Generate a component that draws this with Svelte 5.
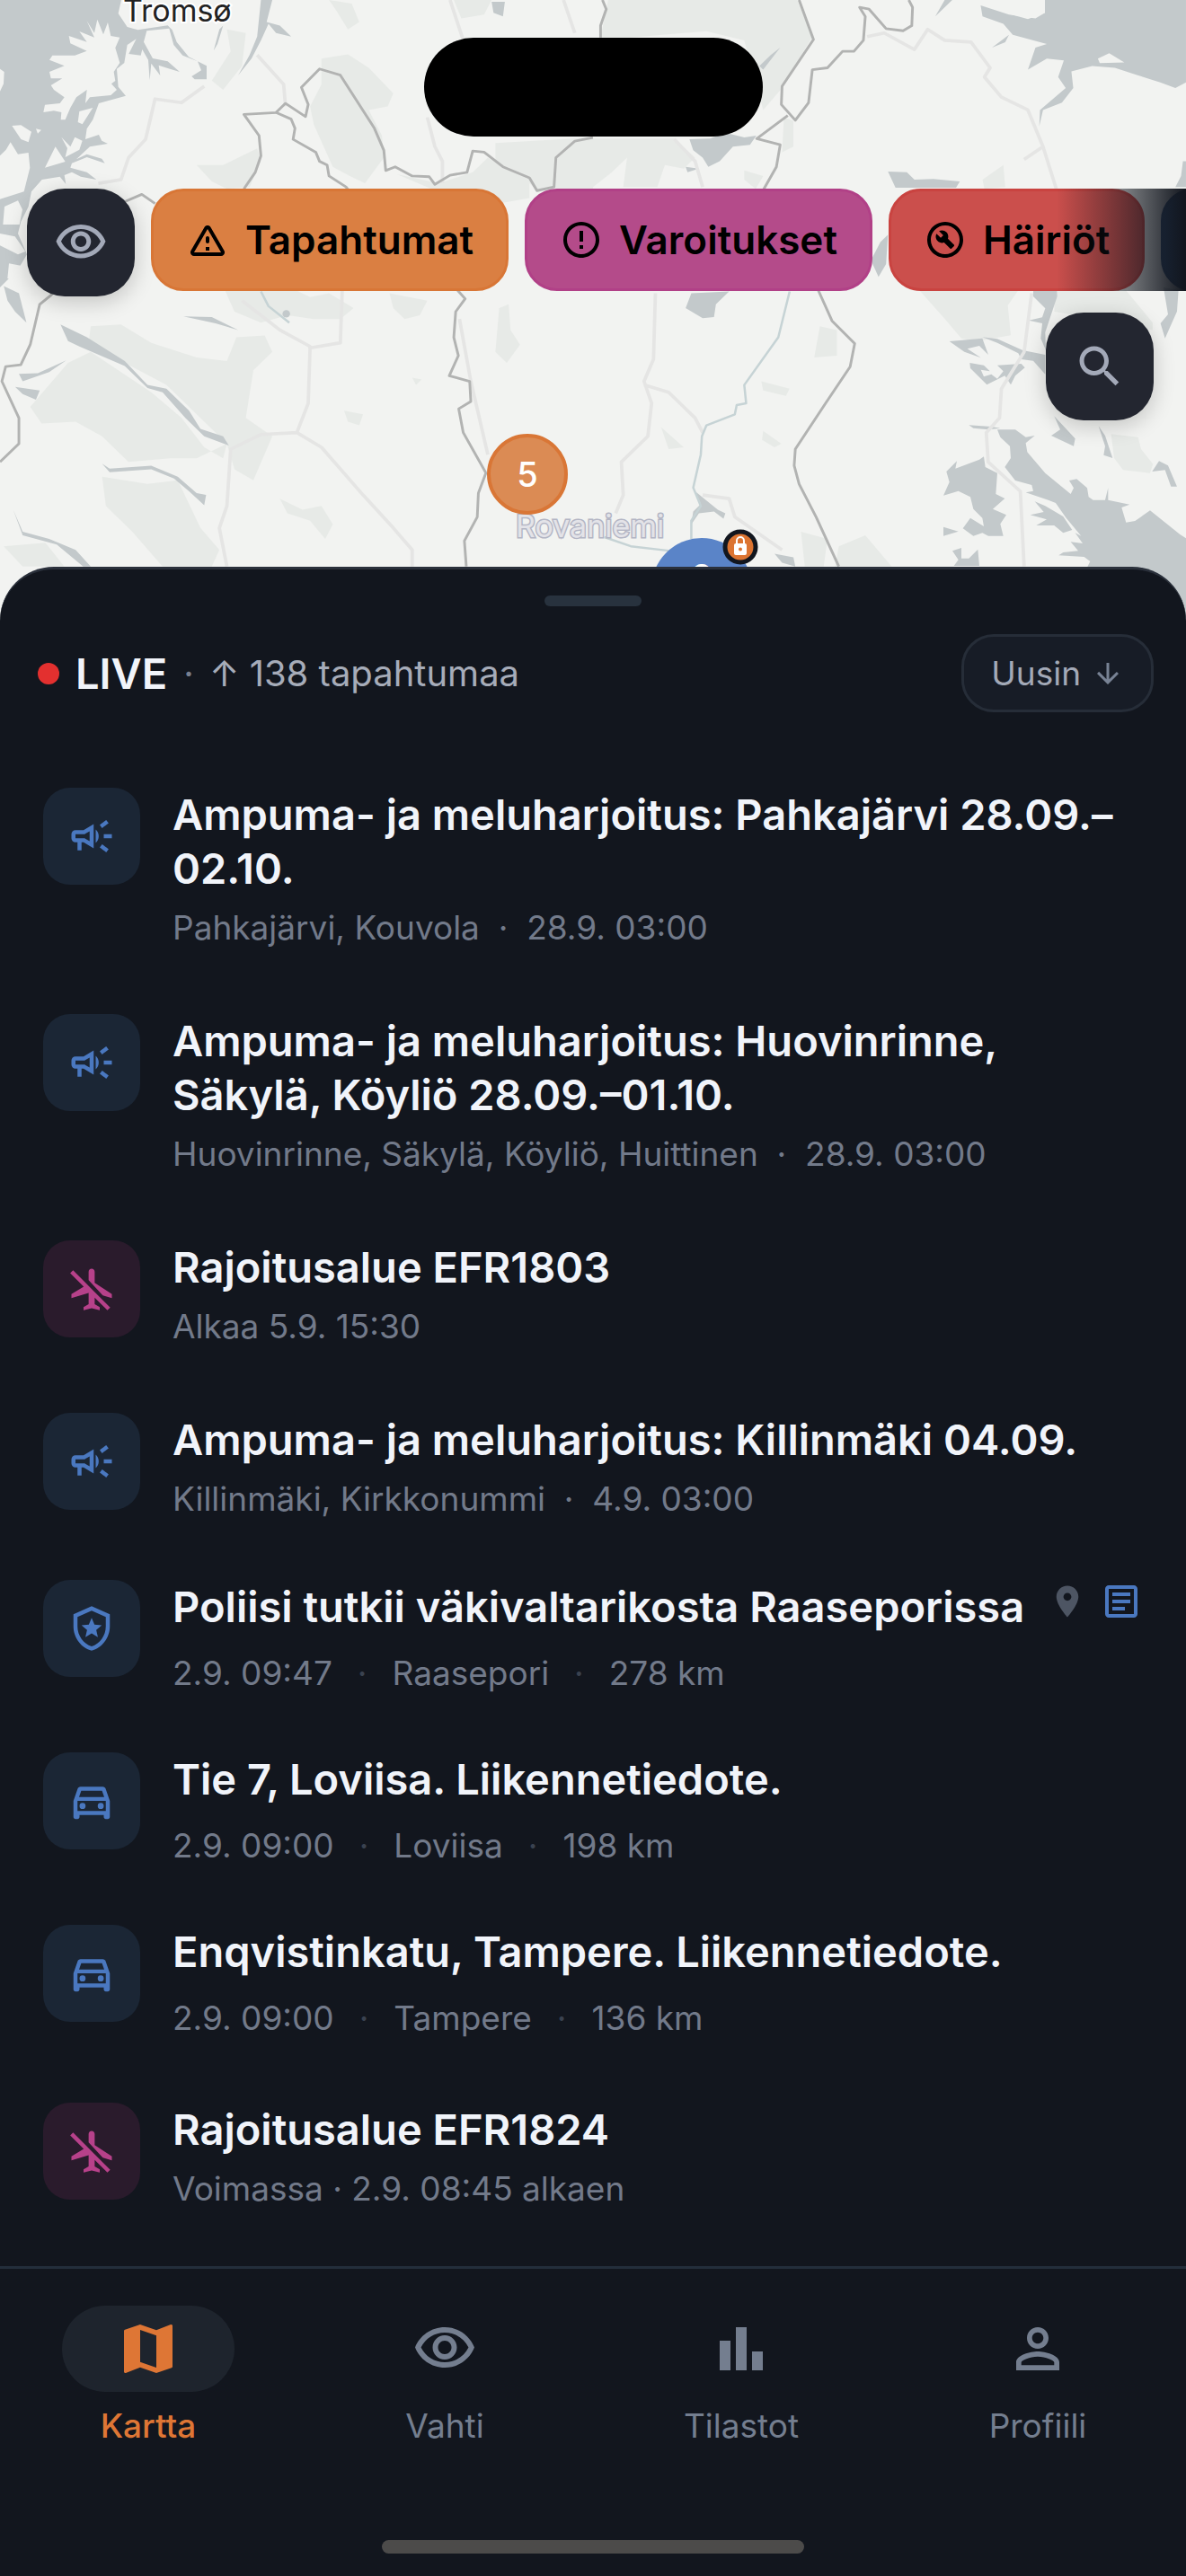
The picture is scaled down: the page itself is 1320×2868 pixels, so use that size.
<script lang="ts">
    const icons = {
        eye: 'M12 6c3.79 0 7.17 2.13 8.82 5.5C19.17 14.87 15.79 17 12 17s-7.17-2.13-8.82-5.5C4.83 8.13 8.21 6 12 6m0-2C7 4 2.73 7.11 1 11.5 2.73 15.89 7 19 12 19s9.27-3.11 11-7.5C21.27 7.11 17 4 12 4zm0 5c1.38 0 2.5 1.12 2.5 2.5S13.38 14 12 14s-2.5-1.12-2.5-2.5S10.62 9 12 9m0-2c-2.48 0-4.5 2.02-4.5 4.5S9.52 16 12 16s4.5-2.02 4.5-4.5S14.48 7 12 7z',
        search: 'M15.5 14h-.79l-.28-.27C15.41 12.59 16 11.11 16 9.5 16 5.91 13.09 3 9.5 3S3 5.91 3 9.5 5.91 16 9.5 16c1.61 0 3.09-.59 4.23-1.57l.27.28v.79l5 4.99L20.49 19l-4.99-5zm-6 0C7.01 14 5 11.99 5 9.5S7.01 5 9.5 5 14 7.01 14 9.5 11.99 14 9.5 14z',
        warning: 'M12 5.99L19.53 19H4.47L12 5.99M2.74 18c-.77 1.33.19 3 1.73 3h15.06c1.54 0 2.5-1.67 1.73-3L13.73 4.99c-.77-1.33-2.69-1.33-3.46 0L2.74 18zM11 11v2c0 .55.45 1 1 1s1-.45 1-1v-2c0-.55-.45-1-1-1s-1 .45-1 1zm0 5h2v2h-2z',
        error: 'M11 15h2v2h-2zm0-8h2v6h-2zm.99-5C6.47 2 2 6.48 2 12s4.47 10 9.99 10C17.52 22 22 17.52 22 12S17.52 2 11.99 2zM12 20c-4.42 0-8-3.58-8-8s3.58-8 8-8 8 3.58 8 8-3.58 8-8 8z',
        build: 'M12 2C6.48 2 2 6.48 2 12s4.48 10 10 10 10-4.48 10-10S17.52 2 12 2zm0 18c-4.41 0-8-3.59-8-8s3.59-8 8-8 8 3.59 8 8-3.59 8-8 8zM13.49 11.38c.43-1.22.17-2.64-.81-3.62-1.11-1.11-2.79-1.3-4.1-.59l2.35 2.35-1.41 1.41-2.35-2.35c-.71 1.32-.52 2.99.59 4.1.98.98 2.4 1.24 3.62.81l3.41 3.41c.2.2.51.2.71 0l1.4-1.4c.2-.2.2-.51 0-.71l-3.41-3.41z',
        campaign: 'M18 11v2h4v-2h-4zM16 17.61c.96.71 2.21 1.65 3.2 2.39.4-.53.8-1.07 1.2-1.6-.99-.74-2.24-1.68-3.2-2.4-.4.54-.8 1.08-1.2 1.61zM20.4 5.6c-.4-.53-.8-1.07-1.2-1.6-.99.74-2.24 1.68-3.2 2.4.4.53.8 1.07 1.2 1.6.96-.72 2.21-1.65 3.2-2.4zM4 9c-1.1 0-2 .9-2 2v2c0 1.1.9 2 2 2h1v4h2v-4h1l5 3V6L8 9H4zm5.03 1.71L11 9.53v4.94l-1.97-1.18-.48-.29H4v-2h4.55l.48-.29zM15.5 12c0-1.33-.58-2.53-1.5-3.35v6.69c.92-.81 1.5-2.01 1.5-3.34z',
        flightOff: 'M10.5 7.67V3.5C10.5 2.67 11.17 2 12 2s1.5.67 1.5 1.5V9l8.5 5.5v2l-4.49-1.33L10.5 7.67zM19.78 22.61l1.41-1.41L13.5 13.5 9.56 9.56 2.81 2.81 1.39 4.22l6.7 6.7L2 14.5v2L10.5 14v5.5L8 21v1.5l4-1 4 1V21l-2.5-1.5v-3.18l6.28 6.29z',
        police: 'M12 1L3 5v6c0 5.55 3.84 10.74 9 12 5.16-1.26 9-6.45 9-12V5l-9-4zm7 10c0 4.52-2.98 8.69-7 9.93C7.98 19.69 5 15.52 5 11V6.3l7-3.11 7 3.11V11zM12 14.44l3.09 1.86-.82-3.51L17 10.42l-3.6-.31L12 6.8l-1.4 3.31-3.6.31 2.73 2.37-.82 3.51z',
        car: 'M18.92 6.01C18.72 5.42 18.16 5 17.5 5h-11c-.66 0-1.21.42-1.42 1.01L3 12v8c0 .55.45 1 1 1h1c.55 0 1-.45 1-1v-1h12v1c0 .55.45 1 1 1h1c.55 0 1-.45 1-1v-8l-2.08-5.99zM6.85 7h10.29l1.08 3.11H5.77L6.85 7zM19 17H5v-5h14v5zM6 14.5a1.5 1.5 0 1 0 3 0a1.5 1.5 0 1 0-3 0zM15 14.5a1.5 1.5 0 1 0 3 0a1.5 1.5 0 1 0-3 0z',
        place: 'M12 2C8.13 2 5 5.13 5 9c0 5.25 7 13 7 13s7-7.75 7-13c0-3.87-3.13-7-7-7zm0 9.5c-1.38 0-2.5-1.12-2.5-2.5s1.12-2.5 2.5-2.5 2.5 1.12 2.5 2.5-1.12 2.5-2.5 2.5z',
        article: 'M19 5v14H5V5h14m0-2H5c-1.1 0-2 .9-2 2v14c0 1.1.9 2 2 2h14c1.1 0 2-.9 2-2V5c0-1.1-.9-2-2-2zM14 17H7v-2h7v2zm3-4H7v-2h10v2zm0-4H7V7h10v2z',
        arrowDown: 'M20 12l-1.41-1.41L13 16.17V4h-2v12.17l-5.58-5.59L4 12l8 8 8-8z',
        map: 'M20.5 3l-.16.03L15 5.1 9 3 3.36 4.9c-.21.07-.36.25-.36.48V20.5c0 .28.22.5.5.5l.16-.03L9 18.9l6 2.1 5.64-1.9c.21-.07.36-.25.36-.48V3.5c0-.28-.22-.5-.5-.5zM15 19l-6-2.11V5l6 2.11V19z',
        chart: 'M4 9h4v11H4zm12 4h4v7h-4zm-6-9h4v16h-4z',
        person: 'M12 5.9c1.16 0 2.1.94 2.1 2.1s-.94 2.1-2.1 2.1S9.9 9.16 9.9 8s.94-2.1 2.1-2.1m0 9c2.97 0 6.1 1.46 6.1 2.1v1.1H5.9V17c0-.64 3.13-2.1 6.1-2.1M12 4C9.79 4 8 5.79 8 8s1.79 4 4 4 4-1.79 4-4-1.79-4-4-4zm0 9c-2.67 0-8 1.34-8 4v3h16v-3c0-2.66-5.33-4-8-4z',
    };

    const chips = [
        { label: 'Tapahtumat', icon: 'warning', tone: 'orange' },
        { label: 'Varoitukset', icon: 'error', tone: 'magenta' },
        { label: 'Häiriöt', icon: 'build', tone: 'red' },
    ];

    const events = [
        { icon: 'campaign', title: 'Ampuma- ja meluharjoitus: Pahkajärvi 28.09.–02.10.', meta: 'Pahkajärvi, Kouvola \u00a0·\u00a0 28.9. 03:00' },
        { icon: 'campaign', title: 'Ampuma- ja meluharjoitus: Huovinrinne, Säkylä, Köyliö 28.09.–01.10.', meta: 'Huovinrinne, Säkylä, Köyliö, Huittinen \u00a0·\u00a0 28.9. 03:00' },
        { icon: 'flightOff', title: 'Rajoitusalue EFR1803', meta: 'Alkaa 5.9. 15:30' },
        { icon: 'campaign', title: 'Ampuma- ja meluharjoitus: Killinmäki 04.09.', meta: 'Killinmäki, Kirkkonummi \u00a0·\u00a0 4.9. 03:00' },
        { icon: 'police', title: 'Poliisi tutkii väkivaltarikosta Raaseporissa', parts: ['2.9. 09:47', 'Raasepori', '278 km'], badges: true },
        { icon: 'car', title: 'Tie 7, Loviisa. Liikennetiedote.', parts: ['2.9. 09:00', 'Loviisa', '198 km'] },
        { icon: 'car', title: 'Enqvistinkatu, Tampere. Liikennetiedote.', parts: ['2.9. 09:00', 'Tampere', '136 km'] },
        { icon: 'flightOff', title: 'Rajoitusalue EFR1824', meta: 'Voimassa · 2.9. 08:45 alkaen' },
    ];

    const tabs = [
        { label: 'Kartta', icon: 'map' },
        { label: 'Vahti', icon: 'eye' },
        { label: 'Tilastot', icon: 'chart' },
        { label: 'Profiili', icon: 'person' },
    ];

    let active = $state('Kartta');
</script>

{#snippet icon(name)}
    <svg class="icon" viewBox="0 0 24 24" aria-hidden="true"><path fill-rule="evenodd" d={icons[name]} /></svg>
{/snippet}

<section class="stage">
    <svg class="map" viewBox="0 0 1320 691" preserveAspectRatio="xMidYMin slice">
        <rect width="1320" height="691" class="land" />
        <!-- Norwegian coast -->
        <g transform="scale(.3333)">
            <path class="water" d="M0 0H405L395 45 425 90 460 100 560 85 575 100 590 140 630 190 690 220 690 265 650 265 640 255 672 235 660 205 610 185 580 150 565 95 490 103 480 140 510 195 560 205 600 240 560 228 530 218 535 252 505 212 500 268 495 200 475 165 470 185 430 180 455 130 425 150 415 210 390 230 395 290 420 320 330 345 310 400 290 430 285 465 330 450 340 470 360 480 300 490 255 532 290 515 340 530 350 545 290 525 240 545 235 560 290 575 322 600 270 590 240 575 215 585 220 615 200 590 140 600 105 640 95 690 70 740 60 780 90 850 60 900 0 960z" />
            <g class="land">
                <path d="M290 70L315 110 325 65 345 115 360 75 370 120 400 125 385 160 400 210 380 240 385 270 372 280 390 300 370 318 300 325 285 345 290 300 255 325 235 360 218 400 203 400 205 375 180 370 145 375 150 350 200 345 215 325 180 300 170 285 208 262 170 262 165 240 215 220 165 200 175 185 250 185 290 170 235 145 230 120 290 140 265 105 315 125z" />
                <path d="M0 230L14 240 12 280 0 305zM40 420L70 418 105 440 95 475 70 465zM120 430L138 434 126 446zM265 372L310 360 275 415 260 408zM35 475L60 515 95 510 100 560 80 640 0 665V520L20 500z" />
                <path d="M185 490L218 540 150 560zM205 458L235 490 250 458 275 470 265 500 218 525 225 495zM15 690L60 670 75 700 65 750 10 750zM0 780L50 790 85 840 60 850 0 820zM30 880L85 890 70 940 25 930z" />
            </g>
        </g>
        <g transform="scale(.4209 .4082)">
            <g class="park">
                <path d="M850 160L920 148 975 185 1040 255 1025 290 975 300 1010 370 1015 430 965 500 925 480 880 455 830 340 820 290 850 230z" />
                <path d="M520 450L590 450 680 405 690 440 660 510 600 515 560 495z" />
                <path d="M1310 390L1568 375V520H1420L1400 500 1310 450z" />
                <path d="M1050 475L1160 500 1250 470 1290 430 1400 500 1400 540 1320 555 1240 520 1140 515z" />
                <path d="M1320 840L1345 830 1350 900 1375 940 1340 990 1310 960z" />
                <path d="M240 890L320 885 400 935 520 975 600 985 625 920 700 915 720 960 670 1010 650 1140 720 1190 670 1310 620 1280 600 1210 440 1050 330 990 235 930z" />
                <path d="M80 1110L180 990 240 960 400 1070 480 1140 540 1220 590 1250 600 1210 520 1250 450 1250 340 1260 270 1190 200 1150 110 1155z" />
                <path d="M270 1300L390 1320 470 1310 530 1440 580 1500 560 1545 430 1545 350 1450 280 1380z" />
                <path d="M590 780H760L820 810 870 800 935 840 900 870 830 870 760 860 690 880 620 850z" />
                <path d="M1030 800L1130 820 1110 860 1070 870 1040 840z" />
                <path d="M870 0L930 10 950 60 920 80 890 30zM1200 0H1300L1280 40 1220 50z" />
                <path d="M600 80L650 90 640 180 590 245 560 220 610 140z" />
                <path d="M910 1120L960 1130 950 1160 920 1150zM1090 1030L1115 1035 1100 1050zM740 1360L800 1390 850 1380 880 1430 860 1470 820 1420 760 1400z" />
                <path d="M10 1490L120 1480 170 1545H60z" />
            </g>
            <g class="water">
                <path d="M690 0H720L705 60 740 70 770 100 730 90 710 65 690 110 665 160 630 205 660 150 680 100z" />
                <path d="M590 70L575 120 565 138 580 80zM1300 5H1335L1330 45 1305 35z" />
                <path d="M160 885L230 920 330 985 390 1050 440 1060 500 1120 530 1170 590 1190 605 1215 540 1190 490 1140 430 1070 390 1058 330 998 210 945 180 930z" />
                <path d="M485 863L560 865 630 900 570 882zM270 1265L290 1278 400 1270 470 1300 520 1345 545 1350 540 1378 500 1340 460 1305 400 1280 290 1288z" />
                <path d="M50 1020L100 1018 175 983 130 1015 60 1040zM40 1055L105 1065 95 1090 60 1075zM35 1390L60 1450 130 1470 200 1500 240 1545 220 1545 150 1485 60 1460z" />
                <path d="M10 780L50 800 70 880 40 850 20 820z" />
            </g>
            <g class="road">
                <path d="M540 235L480 280 410 270 385 380 340 430 320 490 260 500M680 150L750 230 755 290M1130 320L1150 400 1170 440V500M640 820L740 900 820 945 815 1100 785 1180 690 1185 610 1225 600 1380 580 1440 600 1545M905 790L900 935 815 950M785 1180L850 1220 960 1350 1040 1440 1090 1500V1545M1215 870L1245 1040 1290 1240M1190 0L1225 110M1490 0L1520 90" />
            </g>
            <g class="border">
                <path d="M0 1260L50 1210V1140L5 1040 15 1000 55 995 80 940 105 830 135 805 200 740 330 550 375 530 410 555" />
                <path d="M645 515L675 470 690 425 685 370 645 312 730 307 755 282 808 318 815 285 797 238 845 188 900 205 990 350 1015 410 1020 465 1045 455 1090 480 1135 482 1150 503 1190 478 1235 470 1250 412 1280 415 1330 455 1400 485 1420 520 1465 510 1470 430 1520 385 1568 375" />
                <path d="M730 307L770 325 780 350 775 380 835 415 845 440 865 450 870 480 915 510 960 570 1060 600 1130 680 1200 780 1230 815 1205 850 1200 920 1212 970 1188 1025 1242 1040 1245 1095 1213 1115 1225 1180 1285 1290 1265 1345 1262 1410 1228 1475 1233 1545" />
            </g>
            <path class="river" d="M690 795L710 835 765 880" />
            <circle class="water" cx="757" cy="856" r="10" />
        </g>
        <g transform="translate(660 0) scale(.4209 .4082)">
            <g class="park">
                <path d="M40 0H540L580 100 500 240 450 300 400 110 300 85 100 102 20 102z" />
                <path d="M0 378H215L270 430 240 460 190 450 170 510 80 510 90 430 50 470 0 510z" />
                <path d="M505 320L530 330 530 400 500 415zM400 465L450 480 430 515 400 490z" />
                <path d="M1030 490L1085 450 1090 510 1035 515z" />
                <path d="M600 890L645 900 645 970 585 975zM445 1040L520 1060 510 1080 450 1065zM450 1175L498 1210 480 1220 447 1200zM180 1165L240 1220 200 1225z" />
                <path d="M550 1450L620 1470 610 1545H560zM650 1490L720 1460 790 1545H640zM1220 780H1400L1480 880V900L1400 880 1220 850z" />
            </g>
            <g class="water">
                <path d="M1195 0H1568V225L1540 240 1500 225 1440 205 1380 185 1320 180 1265 195 1270 240 1240 280 1190 300 1180 345 1182 300 1250 240 1230 210 1245 165 1200 160 1150 190 1170 130 1200 120 1110 95 1085 65 1030 45 1025 15 1100 40 1170 50 1195 35z" />
                <path d="M950 0L905 45 930 0zM1055 130L1100 95 1090 115z" />
                <path d="M255 380L310 378 350 362 400 375 432 370 415 395 370 400 335 440 305 455 290 430 265 410z" />
                <path d="M495 130L450 190 440 180 470 150zM245 455L280 460 250 470z" />
                <path d="M780 468L830 470 850 490 900 488 970 495 960 512H800z" />
                <path d="M260 800L360 795 325 830 320 865 290 868 245 840z" />
                <path d="M1560 440L1568 440V510H1540L1555 480z" />
                <path d="M270 1340L330 1390 350 1400 345 1415 320 1395 280 1400 260 1430 265 1395 285 1375zM480 1510L530 1520 535 1545 500 1535z" />
                <path d="M735 710L755 755 775 720 780 640 760 660z" />
            </g>
            <g class="land">
                <path d="M1335 160L1365 145 1405 170 1340 172zM1025 0H1195V35L1150 52 1090 35z" />
            </g>
        </g>
        <!-- Kola and the White Sea -->
        <g transform="translate(1050 330) scale(.3333)">
            <path class="park" d="M-80 -20H250L215 30 225 130 110 150 60 140 0 70zM560 460L650 470 660 510 700 560 690 590 600 580 570 540z" />
            <g class="water">
                <path d="M180 445L240 445 275 470 305 465 275 490 280 520 340 590 425 660 435 640 420 615 445 610 480 640 485 670 500 680 540 680 550 640 550 680 622 695 595 705 610 755 640 750 690 715 790 795 830 820V1080H600L480 905 490 885 470 870 385 865 400 855 450 850 425 820 465 825 440 790 460 800 410 740 375 690 350 680 275 655 300 650 295 630 240 615 205 570 225 540 222 500 190 470z" />
                <path d="M290 730L335 720 305 685 340 700 400 735 430 780 400 790 370 765 310 765 345 745zM10 585L45 550 40 575 120 545 135 535 140 570 180 590 175 660 205 675 165 710 210 730 190 760 200 800 150 800 130 790 100 800 65 775 90 740 135 768 130 740 100 710 90 670 50 650 0 665 20 620z" />
                <path d="M0 770L50 785 0 800zM30 850L60 840 60 875 85 875 115 845 120 900H35L50 880zM20 150L130 140 150 195 120 165 80 175 125 205 70 185zM130 136L180 142 265 180 340 195V260L300 215 260 210 250 190 180 155z" />
                <path d="M88 222L135 230 155 250 125 245 135 268 160 260 180 275 200 250 180 230 260 225 272 238 240 265 225 295 205 265 145 295 90 240zM300 -100H375L380 0 360 60 340 120 342 180 325 140 330 90 285 80 330 70 340 40 300 0z" />
                <path d="M735 -30L785 -20 780 50 740 140 725 90 750 60zM370 400L440 475 435 500 360 465 390 445zM85 430L160 435 190 440 150 445 100 440zM518 433L540 465 565 540 535 530 540 500zM697 585L720 550 750 565 780 635 760 635 740 580z" />
            </g>
        </g>
        <g transform="translate(660 0) scale(.4209 .4082)">
            <g class="road">
                <path d="M725 100L770 90 850 135 885 80 930 110 1000 115 1050 185 1035 210 1080 265 1150 300 1190 400 1225 515M1190 400L1140 435M165 800L160 980 135 1040 155 1100 145 1190 75 1260 80 1350 60 1400M135 1050L200 1070 270 1140 290 1180M1160 800L1140 960 1080 1060 1075 1140 1040 1180 1045 1260 1130 1340 1140 1545M215 380L270 440 290 510M290 1350L360 1360 375 1410 500 1500" />
            </g>
            <path class="river" d="M520 795L490 920 400 1050 405 1100 380 1105 375 1130 300 1160 288 1190 285 1240 265 1330 285 1380 260 1420 260 1470M30 1465L100 1490 200 1502" />
            <g class="border">
                <path d="M25 0L35 25 20 70V102M545 0L583 108 500 235 498 285 535 328 570 280 580 190 620 185 660 140 690 140 715 110 720 45 705 20 730 25 775 78 820 84 843 70 845 20 835 0" />
                <path d="M515 315L433 378 495 395 485 455 452 515 440 580 500 730 595 790 632 875 692 937 680 1000 615 1100 535 1225 532 1270 545 1320 590 1410 650 1545" />
            </g>
        </g>
        <text class="place" x="137" y="24">Tromsø</text>
        <text class="place faint" x="574" y="598">Rovaniemi</text>
        <circle class="cluster orange" cx="587" cy="528" r="43" />
        <text class="count" x="587" y="542">5</text>
        <circle class="cluster blue" cx="781" cy="655" r="56" />
        <text class="count" x="781" y="656">8</text>
        <circle class="lock" cx="824" cy="609" r="17" />
        <path class="shackle" d="M820 606v-4a4 4 0 0 1 8 0v4" />
        <path class="lockbody" fill-rule="evenodd" d="M819 605h10a2 2 0 0 1 2 2v9a2 2 0 0 1-2 2h-10a2 2 0 0 1-2-2v-9a2 2 0 0 1 2-2zM824 609.500a2 2 0 1 0 0 4a2 2 0 1 0 0-4z" />
    </svg>
    <div class="island"></div>
    <div class="toolbar">
        <button class="square" aria-label="Näkyvyys">{@render icon('eye')}</button>
        <div class="chips">
            {#each chips as chip}
                <button class="chip {chip.tone}">{@render icon(chip.icon)}<span>{chip.label}</span></button>
            {/each}
            <button class="chip navy" aria-label="Lisää"></button>
        </div>
    </div>
    <button class="square find" aria-label="Haku">{@render icon('search')}</button>
</section>

<main class="sheet">
    <div class="handle"></div>
    <header>
        <span class="dot"></span>
        <h1>LIVE</h1>
        <p><span class="sep">·</span> ↑ 138 tapahtumaa</p>
        <button class="sort">Uusin {@render icon('arrowDown')}</button>
    </header>
    <ul>
        {#each events as event}
            <li class:located={event.parts}>
                <div class="tile" class:pink={event.icon === 'flightOff'}>{@render icon(event.icon)}</div>
                <div class="body">
                    <div class="top">
                        <h2>{event.title}</h2>
                        {#if event.badges}
                            <span class="pin">{@render icon('place')}</span>
                            <span class="news">{@render icon('article')}</span>
                        {/if}
                    </div>
                    {#if event.parts}
                        <div class="meta parts">
                            {#each event.parts as part, i}
                                {#if i > 0}<i>·</i>{/if}<span>{part}</span>
                            {/each}
                        </div>
                    {:else}
                        <p class="meta">{event.meta}</p>
                    {/if}
                </div>
            </li>
        {/each}
    </ul>
</main>

<nav>
    <div class="tabs">
        {#each tabs as tab}
            <button class="tab" class:active={active === tab.label} onclick={() => (active = tab.label)}>
                <span class="pill">{@render icon(tab.icon)}</span>
                {tab.label}
            </button>
        {/each}
    </div>
    <div class="home"></div>
</nav>

<style>
    :global(body) {
        background: #12161e;
        font-family: Inter, "Liberation Sans", sans-serif;
        font-optical-sizing: none;
    }

    button {
        border: none;
        padding: 0;
        font: inherit;
        color: inherit;
        cursor: pointer;
    }

    h1, h2, p, ul {
        margin: 0;
        padding: 0;
        font-weight: inherit;
    }

    .icon {
        display: block;
        flex: none;
        width: 48px;
        height: 48px;
        fill: currentColor;
    }

    /* map */
    .stage {
        position: relative;
        display: flex;
        flex-direction: column;
        padding: 42px 0 223px;
        overflow: hidden;
    }

    .map {
        position: absolute;
        inset: 0;
        width: 100%;
        height: 100%;
    }

    .land { fill: #f2f3f1; }
    .park { fill: #e7eae7; }
    .water { fill: #c3c9cb; }
    .road, .border, .river {
        fill: none;
        stroke-linejoin: round;
        stroke-width: 9;
        stroke: #e5e5e4;
    }
    .border {
        stroke: #b2b3b2;
        stroke-width: 7;
    }
    .river {
        stroke: #c6d3d5;
        stroke-width: 6;
    }

    .place {
        font-size: 34px;
        fill: #222;
        stroke: #fff;
        stroke-width: 4;
        paint-order: stroke;
    }
    .place.faint {
        fill: #e3e3e8;
        stroke: #b3b5c4;
        stroke-width: 3;
    }

    .cluster.orange {
        fill: #db8b54;
        stroke: #d97636;
        stroke-width: 4;
    }
    .cluster.blue { fill: #5a84c8; }
    .count {
        font-size: 38px;
        font-weight: 500;
        text-anchor: middle;
        fill: #fff;
    }
    .lock {
        fill: #dc7431;
        stroke: #12161e;
        stroke-width: 5;
    }
    .lockbody { fill: #fff; }
    .shackle {
        fill: none;
        stroke: #fff;
        stroke-width: 2;
    }

    .island {
        position: relative;
        align-self: center;
        width: 377px;
        height: 110px;
        margin-bottom: 58px;
        border-radius: 55px;
        background: #000;
    }

    .toolbar {
        position: relative;
        display: flex;
        align-items: flex-start;
        gap: 18px;
        padding-left: 30px;
    }

    .square {
        position: relative;
        display: grid;
        place-items: center;
        flex: none;
        width: 120px;
        height: 120px;
        border-radius: 42px;
        background: #232630;
        color: #a3a9b8;
        box-shadow: 0 6px 24px rgba(0, 0, 0, .2);
    }
    .square .icon {
        width: 60px;
        height: 60px;
    }

    .find {
        align-self: flex-end;
        margin: 18px 36px 0;
    }

    .chips {
        position: relative;
        display: flex;
        flex: 1;
        gap: 18px;
        min-width: 0;
        overflow: hidden;
    }
    .chips::after {
        content: '';
        position: absolute;
        inset: 0 0 0 auto;
        width: 144px;
        background: linear-gradient(to right, transparent, #12161e);
    }

    .chip {
        display: flex;
        align-items: center;
        flex: none;
        gap: 18px;
        height: 114px;
        padding: 0 36px;
        border: 3px solid;
        border-radius: 36px;
        font-size: 44px;
        font-weight: 600;
        color: #000;
    }
    .chip.orange {
        background: #da7f42;
        border-color: #d87636;
    }
    .chip.magenta {
        background: #b44b8a;
        border-color: #b14087;
    }
    .chip.red {
        background: #cb4f4c;
        border-color: #c94340;
    }
    .chip.navy {
        width: 288px;
        background: #2e5486;
        border-color: #2b4e7c;
    }

    /* sheet */
    .sheet {
        position: relative;
        margin-top: -60px;
        padding-bottom: 26px;
        border-top: 3px solid #2a303b;
        border-radius: 60px 60px 0 0;
        background: #12161e;
    }

    .handle {
        width: 108px;
        height: 12px;
        margin: 29px auto 31px;
        border-radius: 6px;
        background: #28323e;
    }

    header {
        display: flex;
        align-items: center;
        padding: 0 36px 0 42px;
        margin-bottom: 48px;
    }
    .dot {
        width: 24px;
        height: 24px;
        margin-right: 18px;
        border-radius: 50%;
        background: #e3302f;
    }
    h1 {
        font-size: 47px;
        font-weight: 600;
        color: #f1f4fa;
    }
    header p {
        flex: 1;
        margin-left: 18px;
        font-size: 40px;
        color: #a6acb9;
    }
    .sep {
        margin-right: 6px;
        color: #788090;
    }

    .sort {
        display: flex;
        align-items: center;
        gap: 12px;
        height: 87px;
        padding: 0 30px;
        border: 3px solid #262d38;
        border-radius: 36px;
        background: #171c26;
        font-size: 37px;
        color: #a3a9b7;
    }
    .sort .icon {
        width: 36px;
        height: 36px;
        color: #788294;
    }

    ul { list-style: none; }

    li {
        display: flex;
        align-items: flex-start;
        gap: 36px;
        padding: 36px 48px;
    }
    li.located { padding: 30px 48px 34px; }

    .tile {
        display: grid;
        place-items: center;
        flex: none;
        width: 108px;
        height: 108px;
        border-radius: 30px;
        background: #1b2635;
        color: #4a78c0;
    }
    .tile.pink {
        background: #2a1b2c;
        color: #b7418a;
    }
    .tile .icon {
        width: 54px;
        height: 54px;
    }

    .body {
        flex: 1;
        min-width: 0;
    }
    .top {
        display: flex;
        align-items: flex-start;
    }
    h2 {
        flex: 1;
        font-size: 47px;
        line-height: 60px;
        font-weight: 600;
        color: #f1f4fa;
    }
    .pin .icon {
        width: 42px;
        height: 42px;
        margin: 3px 15px 0 12px;
        color: #4d5563;
    }
    .news { color: #4a78c0; }

    .meta {
        margin-top: 12px;
        font-size: 37px;
        line-height: 48px;
        color: #727a8a;
    }
    .parts {
        display: flex;
        gap: 28px;
        margin-top: 20px;
    }
    .parts i {
        font-style: normal;
        color: #3a4250;
    }

    /* bottom bar */
    nav {
        padding: 41px 0 24px;
        border-top: 3px solid #232e3b;
        background: #12161e;
    }
    .tabs {
        display: grid;
        grid-template-columns: repeat(4, 1fr);
        margin-bottom: 103px;
    }
    .tab {
        display: flex;
        flex-direction: column;
        align-items: center;
        gap: 14px;
        background: none;
        font-size: 37px;
        line-height: 48px;
        color: #747e8f;
    }
    .tab.active {
        font-weight: 500;
        color: #de7635;
    }
    .pill {
        display: grid;
        place-items: center;
        width: 192px;
        height: 96px;
        border-radius: 48px;
    }
    .active .pill { background: #1e242d; }
    .pill .icon {
        width: 72px;
        height: 72px;
    }
    .home {
        width: 470px;
        height: 15px;
        margin: 0 auto;
        border-radius: 8px;
        background: #4c4b4a;
    }
</style>
